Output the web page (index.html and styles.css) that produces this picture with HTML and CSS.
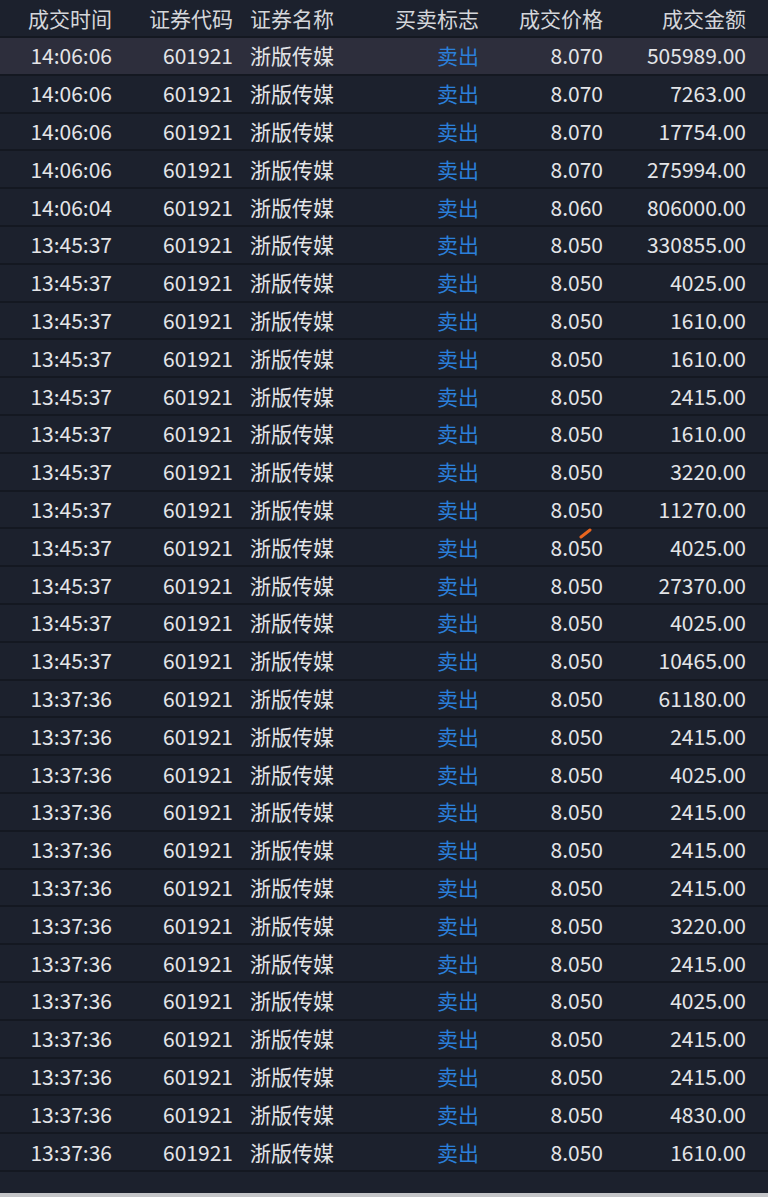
FILE: index.html
```html
<!doctype html>
<html>
 <head>
  <meta charset="utf-8">
  <link rel="stylesheet" href="styles.css">
 </head>
 <body>
  <div class="tabla">
   <div class="fila cabecera">
    <span>成交时间</span><span>证券代码</span><span class="nombre">证券名称</span><span>买卖标志</span><span>成交价格</span><span>成交金额</span>
   </div>
   <div id="cuerpo"></div>
   <svg class="marca" width="14" height="12" viewBox="0 0 14 12"><line x1="2" y1="10" x2="11" y2="3" stroke="#e8651f" stroke-width="3" stroke-linecap="round"/></svg>
  </div>
  <script>
    var datos = [
      ['14:06:06', '8.070', '505989.00'],
      ['14:06:06', '8.070', '7263.00'],
      ['14:06:06', '8.070', '17754.00'],
      ['14:06:06', '8.070', '275994.00'],
      ['14:06:04', '8.060', '806000.00'],
      ['13:45:37', '8.050', '330855.00'],
      ['13:45:37', '8.050', '4025.00'],
      ['13:45:37', '8.050', '1610.00'],
      ['13:45:37', '8.050', '1610.00'],
      ['13:45:37', '8.050', '2415.00'],
      ['13:45:37', '8.050', '1610.00'],
      ['13:45:37', '8.050', '3220.00'],
      ['13:45:37', '8.050', '11270.00'],
      ['13:45:37', '8.050', '4025.00'],
      ['13:45:37', '8.050', '27370.00'],
      ['13:45:37', '8.050', '4025.00'],
      ['13:45:37', '8.050', '10465.00'],
      ['13:37:36', '8.050', '61180.00'],
      ['13:37:36', '8.050', '2415.00'],
      ['13:37:36', '8.050', '4025.00'],
      ['13:37:36', '8.050', '2415.00'],
      ['13:37:36', '8.050', '2415.00'],
      ['13:37:36', '8.050', '2415.00'],
      ['13:37:36', '8.050', '3220.00'],
      ['13:37:36', '8.050', '2415.00'],
      ['13:37:36', '8.050', '4025.00'],
      ['13:37:36', '8.050', '2415.00'],
      ['13:37:36', '8.050', '2415.00'],
      ['13:37:36', '8.050', '4830.00'],
      ['13:37:36', '8.050', '1610.00']
    ];

    var html = '';
    for (var i = 0; i < datos.length; i++) {
        var d = datos[i];
        html += '<div class="fila' + (i == 0 ? ' activa' : '') + '">' +
            '<span>' + d[0] + '</span>' +
            '<span>601921</span>' +
            '<span class="nombre">浙版传媒</span>' +
            '<span class="venta">卖出</span>' +
            '<span>' + d[1] + '</span>' +
            '<span>' + d[2] + '</span>' +
            '</div>';
    }
    document.getElementById('cuerpo').innerHTML = html;
  </script>
 </body>
</html>
```

FILE: styles.css
```css
body {
    margin: 0;
    padding: 0;
    background-color: #1c212d; /* Fondo oscuro */
    color: #e4e5e8;
    font-family: "Noto Sans CJK SC", "Noto Sans", sans-serif;
    font-size: 21px;
}
.tabla {
    position: relative;
    height: 1193px;
    border-bottom: 4px solid #c4c5c8;
}
.fila {
    display: grid;
    grid-template-columns: 112px 121px 112px 134px 124px 143px;
    align-items: center;
    height: 37.8px;
    box-sizing: border-box;
    border-bottom: 2px solid #141821;
    line-height: 1;
}
.fila span {
    text-align: right;
    white-space: nowrap;
}
.fila .nombre {
    text-align: left;
    padding-left: 17px;
}
.cabecera {
    height: 38px;
    color: #d4d6da;
}
.activa {
    background-color: #2d2e3c; /* Fila seleccionada */
}
.venta {
    color: #2b7fd9;
}
.marca {
    position: absolute;
    left: 579px;
    top: 527px;
}
```
